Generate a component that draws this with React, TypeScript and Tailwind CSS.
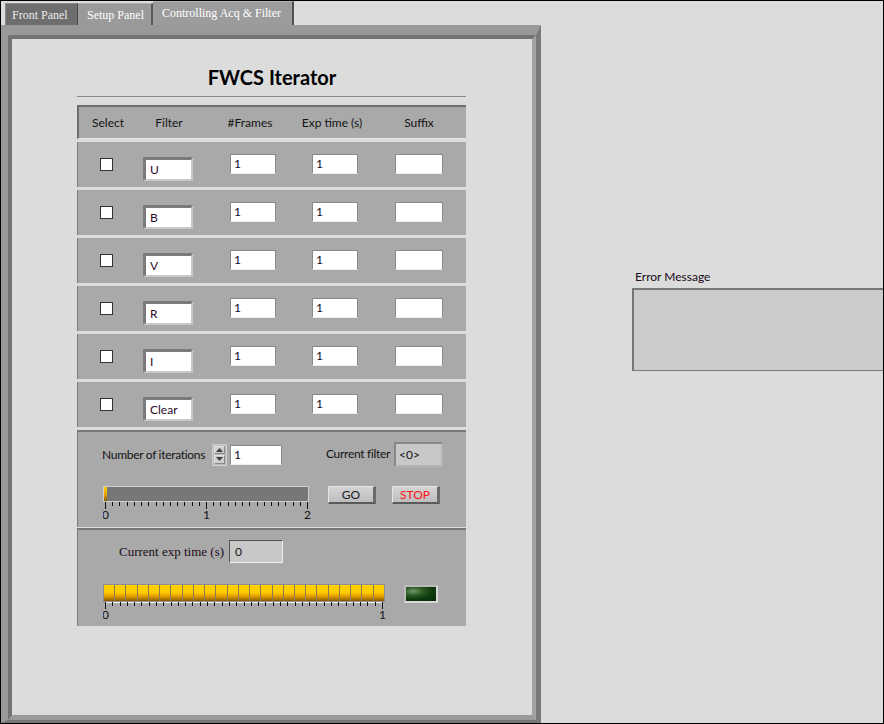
import React from "react";

function NumBox({ value, ml, w = "w-[46px]" }: { value: string; ml: string; w?: string }) {
  return (
    <div
      className={`${ml} ${w} mt-[12px] h-[20px] border border-[#8a8a8a] border-b-[#ececec] bg-white pl-[3px] text-[12px] leading-[18px] text-[#0a0a1e]`}
    >
      {value}
    </div>
  );
}

function FilterRow({ name }: { name: string }) {
  return (
    <div className="mt-[3px] flex h-[45px] items-start border-l border-[#7c7c7c] bg-[#a9a9a9]">
      <div className="ml-[22px] mt-[16px] h-[13px] w-[13px] border border-[#333333] bg-white" />
      <div className="ml-[30px] mt-[15px] flex h-[24px] w-[50px] items-center border-b-2 border-l-[3px] border-r-2 border-t-[3px] border-b-[#c8c8c8] border-l-[#7a7a7a] border-r-[#c8c8c8] border-t-[#7a7a7a] bg-white pl-[4px] text-[12px] text-[#2a0a2a]">
        {name}
      </div>
      <NumBox ml="ml-[37px]" value="1" />
      <NumBox ml="ml-[36px]" value="1" />
      <NumBox ml="ml-[37px]" value="" w="w-[48px]" />
    </div>
  );
}

function Scale({
  width,
  start,
  end,
  intervals,
  labels,
  baseline,
}: {
  width: number;
  start: number;
  end: number;
  intervals: number;
  labels: { at: number; text: string }[];
  baseline?: boolean;
}) {
  const ticks: number[] = [];
  for (let i = 0; i <= intervals; i++) ticks.push(start + ((end - start) * i) / intervals);
  return (
    <svg width={width} height={22} className="block">
      {baseline && <line x1={start} x2={end} y1={0.5} y2={0.5} stroke="#f4f4f4" strokeWidth={1} />}
      {ticks.map((x, i) => {
        const major = labels.some((l) => Math.abs(l.at - x) < 0.5);
        return (
          <line
            key={i}
            x1={Math.round(x) + 0.5}
            x2={Math.round(x) + 0.5}
            y1={0}
            y2={major ? 7 : 4}
            stroke="#111"
            strokeWidth={1}
          />
        );
      })}
      {labels.map((l, i) => (
        <text
          key={i}
          x={l.at + 0.5}
          y={17}
          textAnchor="middle"
          fontSize={12}
          fontFamily="Lato, 'Noto Sans', sans-serif"
          fill="#111"
        >
          {l.text}
        </text>
      ))}
    </svg>
  );
}

function Button({ label, red }: { label: string; red?: boolean }) {
  return (
    <div
      className={`flex h-[18px] w-[48px] items-center justify-center border-b-2 border-l border-r-[3px] border-t border-b-[#5a5a5a] border-l-[#e4e4e4] border-r-[#6a6a6a] border-t-[#e4e4e4] bg-[linear-gradient(to_bottom,#d4d4d4,#bdbdbd)] text-[12px] ${
        red ? "text-[#ff1010]" : "text-[#202020]"
      }`}
    >
      {label}
    </div>
  );
}

export default function App() {
  const segs = Array.from({ length: 25 });
  return (
    <div className="flex h-[724px] w-[884px] border border-black bg-[#dcdcdc] font-['Lato','Noto_Sans',sans-serif] text-[#141414]">
      {/* left column: tabs + frame */}
      <div className="flex w-[540px] flex-col">
        <div className="flex h-[24px] items-end pl-[4px] font-['Liberation_Serif',serif] text-[12px]">
          <div className="flex h-[22px] w-[73px] items-center border-l border-r border-t border-l-[#8a8a8a] border-r-[#4a4a4a] border-t-[#8a8a8a] bg-[#6e6e6e] pl-[6px] text-[#ececec]">
            Front Panel
          </div>
          <div className="flex h-[22px] w-[75px] items-center border-r-2 border-t border-r-[#5a5a5a] border-t-[#b0b0b0] bg-[#9a9a9a] pl-[9px] text-white">
            Setup Panel
          </div>
          <div className="flex h-[24px] w-[141px] items-start border-r-2 border-t border-r-[#505050] border-t-[#b4b4b4] bg-[#9c9c9c] pl-[9px] pt-[2px] text-white">
            Controlling Acq &amp; Filter
          </div>
        </div>
        <div className="h-[698px] border-b-[3px] border-l-[7px] border-r-[5px] border-t-[10px] border-b-[#777777] border-l-[#999999] border-r-[#7a7a7a] border-t-[#999999]">
          <div className="h-full border-b-[5px] border-l-4 border-r-4 border-t-4 border-b-[#9a9a9a] border-l-[#737373] border-r-[#a2a2a2] border-t-[#737373] bg-[#dcdcdc]">
            <div className="flex flex-col">
              <div className="mt-[26px] h-[24px] text-center text-[20px] font-bold leading-[24px] text-black">
                FWCS Iterator
              </div>
              <div className="ml-[65px] mt-[7px] h-px w-[389px] bg-[#8a8a8a]" />
              <div className="ml-[65px] mt-[8px] flex w-[389px] flex-col">
                {/* header */}
                <div className="flex h-[34px] items-center border-b border-l-2 border-t-2 border-b-[#e6e6e6] border-l-[#6e6e6e] border-t-[#6e6e6e] bg-[#a9a9a9] pt-px text-[12px]">
                  <span className="w-[58px] text-center">Select</span>
                  <span className="w-[64px] text-center">Filter</span>
                  <span className="w-[98px] text-center">#Frames</span>
                  <span className="w-[66px] text-center">Exp time (s)</span>
                  <span className="ml-[7px] w-[94px] text-center">Suffix</span>
                </div>
                {["U", "B", "V", "R", "I", "Clear"].map((f) => (
                  <FilterRow key={f} name={f} />
                ))}
                {/* control area 1 */}
                <div className="mt-[3px] flex h-[97px] flex-col border-l border-t-2 border-l-[#7c7c7c] border-t-[#777777] bg-[#a9a9a9]">
                  <div className="ml-[24px] mt-[10px] flex h-[25px] items-center text-[12px]">
                    <span className="w-[110px] whitespace-nowrap tracking-[-0.3px]">Number of iterations</span>
                    <div className="flex h-[22px] w-[15px] flex-col gap-px border border-[#d0d0d0] bg-[#b8b8b8] p-px">
                      <div className="flex flex-1 items-center justify-center border border-[#e4e4e4] border-b-[#8a8a8a] border-r-[#8a8a8a] bg-[#cfcfcf]">
                        <svg width="7" height="4" viewBox="0 0 7 4">
                          <path d="M0 4 L3.5 0 L7 4 Z" fill="#404040" />
                        </svg>
                      </div>
                      <div className="flex flex-1 items-center justify-center border border-[#e4e4e4] border-b-[#8a8a8a] border-r-[#8a8a8a] bg-[#cfcfcf]">
                        <svg width="7" height="4" viewBox="0 0 7 4">
                          <path d="M0 0 L3.5 4 L7 0 Z" fill="#404040" />
                        </svg>
                      </div>
                    </div>
                    <div className="ml-[3px] h-[20px] w-[52px] border border-[#8a8a8a] border-b-[#ececec] bg-white pl-[3px] leading-[18px] text-[#0a0a1e]">
                      1
                    </div>
                    <span className="ml-[44px] -mt-[2px] w-[68px] whitespace-nowrap tracking-[-0.3px]">Current filter</span>
                    <div className="flex h-[25px] w-[49px] items-center border-2 border-b-[#b4b4b4] border-l-[#888888] border-r-[#b4b4b4] border-t-[#888888] bg-[#c8c8c8] pl-[3px] text-[#141414]">
                      &lt;0&gt;
                    </div>
                  </div>
                  <div className="ml-[25px] mt-[19px] flex items-start">
                    <div className="flex w-[210px] flex-col">
                      <div className="flex h-[16px] w-[206px] border border-[#cfcfcf] bg-[#777777]">
                        <div className="h-full w-[3px] bg-[linear-gradient(to_bottom,#ffd000,#f0a800,#8a5a00)]" />
                      </div>
                      <Scale
                        width={210}
                        start={2}
                        end={204}
                        intervals={28}
                        labels={[
                          { at: 2, text: "0" },
                          { at: 103, text: "1" },
                          { at: 204, text: "2" },
                        ]}
                      />
                    </div>
                    <div className="ml-[15px]">
                      <Button label="GO" />
                    </div>
                    <div className="ml-[16px]">
                      <Button label="STOP" red />
                    </div>
                  </div>
                </div>
                {/* control area 2 */}
                <div className="mt-px flex h-[98px] flex-col border-l border-t-2 border-l-[#7c7c7c] border-t-[#777777] bg-[#a9a9a9]">
                  <div className="ml-[41px] mt-[10px] flex h-[23px] items-center">
                    <span className="w-[110px] whitespace-nowrap font-['Liberation_Serif',serif] text-[13px] text-[#1a0a1a]">
                      Current exp time (s)
                    </span>
                    <div className="h-[23px] w-[54px] border border-b-[#f0f0f0] border-l-[#555555] border-r-[#f0f0f0] border-t-[#555555] bg-[#c8c8c8] pl-[5px] text-[12px] leading-[21px] text-[#141414]">
                      0
                    </div>
                  </div>
                  <div className="ml-[25px] mt-[21px] flex items-start">
                    <div className="flex w-[286px] flex-col">
                      <div className="flex h-[18px] w-[282px] border border-[#8e8e8e] bg-[#8e8e8e]">
                        {segs.map((_, i) => (
                          <div
                            key={i}
                            className="h-full flex-1 border-r border-[#8a7a50] bg-[linear-gradient(to_bottom,#ffd200_0%,#ffcc00_45%,#e0a000_70%,#8a5800_100%)] last:border-r-0"
                          />
                        ))}
                      </div>
                      <Scale
                        width={286}
                        start={2}
                        end={279}
                        intervals={38}
                        baseline
                        labels={[
                          { at: 2, text: "0" },
                          { at: 279, text: "1" },
                        ]}
                      />
                    </div>
                    <div className="ml-[15px] mt-px h-[18px] w-[34px] border-2 border-b-[#d8d8d8] border-l-[#bcbcbc] border-r-[#d8d8d8] border-t-[#bcbcbc] bg-[radial-gradient(ellipse_at_25%_30%,#6e9a6e_0%,#2e5a22_30%,#0c3a0c_60%,#082a06_100%)]" />
                  </div>
                </div>
              </div>
            </div>
          </div>
        </div>
      </div>
      {/* right column */}
      <div className="flex flex-1 flex-col pl-[91px] pt-[268px]">
        <div className="h-[16px] pl-[3px] text-[12px] leading-[16px] text-[#1a0a1a]">Error Message</div>
        <div className="mt-[3px] h-[83px] border-b border-l-2 border-t-2 border-b-[#7a7a7a] border-l-[#777777] border-t-[#777777] bg-[#cbcbcb]" />
      </div>
    </div>
  );
}
